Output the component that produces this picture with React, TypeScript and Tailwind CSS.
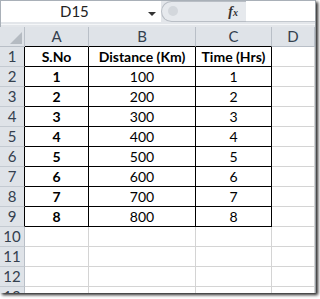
const cols = ["A", "B", "C", "D"];
const colWidths = ["w-[64px]", "w-[107px]", "w-[76px]", "w-[43px]"];

const data = [
  ["S.No", "Distance (Km)", "Time (Hrs)"],
  ["1", "100", "1"],
  ["2", "200", "2"],
  ["3", "300", "3"],
  ["4", "400", "4"],
  ["5", "500", "5"],
  ["6", "600", "6"],
  ["7", "700", "7"],
  ["8", "800", "8"],
];

function FormulaBar() {
  return (
    <div className="h-[27px] bg-[#e3e6ea] border-t border-l border-[#a9b0b8]">
      <div className="flex h-[21px]">
        <div className="w-[160px] bg-white flex items-center relative">
          <span className="ml-[59px] text-[15px] text-[#222] leading-none">D15</span>
          <span className="absolute left-[147px] top-[11px] w-0 h-0 border-l-[4px] border-r-[4px] border-t-[4px] border-l-transparent border-r-transparent border-t-[#333]" />
        </div>
        <div className="w-[85px] bg-[#e6e9ed] border-t border-b border-[#b9bec5] rounded-l-[12px] border-l flex items-center relative">
          <span className="absolute left-[6px] top-[4px] w-[10px] h-[10px] rounded-full bg-[#d3d7dc]" />
          <span className="ml-auto mr-[8px] italic font-bold text-[14px] text-[#333] leading-none" style={{ fontFamily: '"Liberation Serif", serif' }}>
            f<span className="text-[10px]">x</span>
          </span>
        </div>
        <div className="flex-1 bg-white border-b border-[#c3c8ce]" />
      </div>
      <div className="h-[2px]" />
      <div className="h-px bg-[#f4f6f8]" />
    </div>
  );
}

function HeaderRow() {
  return (
    <div className="flex h-[20px]">
      <div className="w-[25px] bg-[#dfe3e8] border-r border-b border-[#b9bfc7] relative">
        <svg className="absolute right-[2px] bottom-[2px]" width="12" height="12" viewBox="0 0 12 12">
          <polygon points="12,0 12,12 0,12" fill="#b5bbc2" />
        </svg>
      </div>
      {cols.map((c, i) => (
        <div
          key={c}
          className={`${colWidths[i]} bg-[#dfe3e8] border-r ${i < 3 ? "border-b-black" : "border-b-[#b9bfc7]"} border-b border-r-[#b9bfc7] flex items-center justify-center text-[15px] text-[#34404e] leading-none`}
        >
          {c}
        </div>
      ))}
    </div>
  );
}

function Row({ n }: { n: number }) {
  const row = data[n - 1];
  const inTable = !!row;
  return (
    <div className="flex h-[20px]">
      <div
        className={`w-[25px] bg-[#dfe3e8] border-b border-b-[#c4cad1] border-r ${inTable ? "border-r-black" : "border-r-[#b9bfc7]"} flex items-center justify-center text-[15px] text-[#34404e] leading-none`}
      >
        {n}
      </div>
      {cols.map((c, i) => {
        const isData = inTable && i < 3;
        const bold = isData && (n === 1 || i === 0);
        return (
          <div
            key={c}
            className={`${colWidths[i]} bg-white border-r border-b ${isData ? "border-r-black border-b-black" : "border-r-[#d4d4d4] border-b-[#d4d4d4]"} flex items-center justify-center text-[14px] text-black leading-none ${bold ? "font-bold" : ""}`}
          >
            {isData ? row[i] : ""}
          </div>
        );
      })}
    </div>
  );
}

export default function App() {
  return (
    <div className="w-[320px] h-[299px] bg-white overflow-hidden" style={{ fontFamily: 'Lato, "Open Sans", sans-serif' }}>
      <div className="w-[316px] h-[293px] overflow-hidden bg-white shadow-[2px_2px_3px_rgba(0,0,0,0.85)] border-r border-[#9aa0a6]">
        <FormulaBar />
        <HeaderRow />
        {Array.from({ length: 13 }, (_, k) => (
          <Row key={k} n={k + 1} />
        ))}
      </div>
    </div>
  );
}
